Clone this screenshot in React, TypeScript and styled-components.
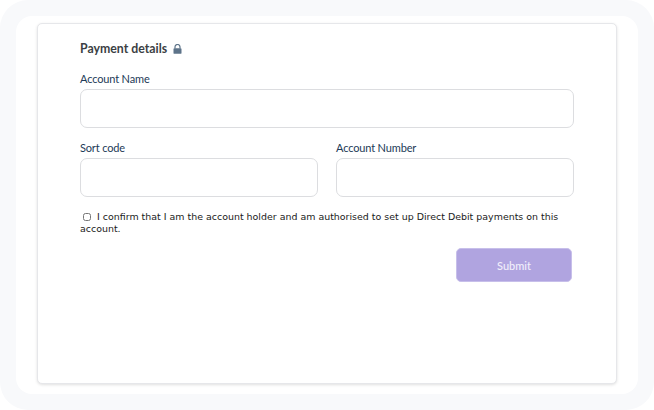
import React from 'react';
import styled, { createGlobalStyle } from 'styled-components';

const GlobalStyle = createGlobalStyle`
  html, body {
    margin: 0;
    padding: 0;
    background: #ffffff;
  }
`;

const Frame = styled.div`
  box-sizing: border-box;
  width: 654px;
  height: 410px;
  padding: 16px;
  background-color: #f8f9fb;
  border-radius: 28px;
`;

const Screen = styled.div`
  box-sizing: border-box;
  height: 378px;
  padding: 7px 21px 10px;
  background-color: #ffffff;
  border-radius: 16px;
`;

const Card = styled.div`
  box-sizing: border-box;
  width: 580px;
  height: 361px;
  padding: 17px 42px 0;
  background-color: #ffffff;
  border: 1px solid #e6e7ea;
  border-radius: 5px;
  box-shadow: 0 1px 3px rgba(0, 0, 0, 0.12);
`;

const Heading = styled.div`
  display: flex;
  align-items: center;
  gap: 6px;
  height: 15px;
  margin-bottom: 15px;
  font-family: 'Lato', sans-serif;
  font-size: 12.3px;
  font-weight: 700;
  color: #3c3f44;
`;

const Row = styled.div`
  display: flex;
  gap: 18px;
  margin-bottom: 12px;
`;

const Field = styled.div`
  flex: 1;
  min-width: 0;
`;

const Label = styled.label`
  display: block;
  height: 15px;
  margin-bottom: 3px;
  font-family: 'Lato', sans-serif;
  font-size: 11px;
  line-height: 15px;
  letter-spacing: -0.15px;
  color: #1d3a57;
`;

const Input = styled.input`
  display: block;
  box-sizing: border-box;
  width: 100%;
  height: 39px;
  background-color: #ffffff;
  border: 1px solid #dcdde0;
  border-radius: 7px;
  outline: none;
`;

const Confirm = styled.div`
  margin-top: 14px;
  font-family: 'DejaVu Sans', Verdana, sans-serif;
  font-size: 9.45px;
  line-height: 12px;
  color: #1a1a1a;
`;

const Tick = styled.input`
  width: 8px;
  height: 8px;
  margin: 0 6px 0 3px;
  vertical-align: -0.5px;
`;

const Actions = styled.div`
  display: flex;
  justify-content: flex-end;
  margin-top: 13px;
  padding-right: 2px;
`;

const SubmitButton = styled.button`
  width: 116px;
  height: 34px;
  background-color: #b0a4e0;
  border: 1px solid #c7bfea;
  border-radius: 5px;
  font-family: 'Lato', sans-serif;
  font-size: 11px;
  font-weight: 500;
  color: #f1eefb;
`;

const LockIcon = () => (
  <svg width="9" height="10" viewBox="0 0 9 10" aria-hidden="true">
    <path d="M2 4.4V3a2.5 2.5 0 0 1 5 0v1.4" fill="none" stroke="#5d7389" strokeWidth="1.2" />
    <rect x="0.5" y="4.2" width="8" height="5.6" rx="0.9" fill="#5d7389" />
  </svg>
);

const App: React.FC = () => (
  <>
    <GlobalStyle />
    <Frame>
      <Screen>
        <Card>
          <Heading>
            Payment details
            <LockIcon />
          </Heading>
          <Row>
            <Field>
              <Label>Account Name</Label>
              <Input type="text" />
            </Field>
          </Row>
          <Row>
            <Field>
              <Label>Sort code</Label>
              <Input type="text" />
            </Field>
            <Field>
              <Label>Account Number</Label>
              <Input type="text" />
            </Field>
          </Row>
          <Confirm>
            <Tick type="checkbox" />
            I confirm that I am the account holder and am authorised to set up Direct Debit payments on this account.
          </Confirm>
          <Actions>
            <SubmitButton type="button">Submit</SubmitButton>
          </Actions>
        </Card>
      </Screen>
    </Frame>
  </>
);

export default App;
